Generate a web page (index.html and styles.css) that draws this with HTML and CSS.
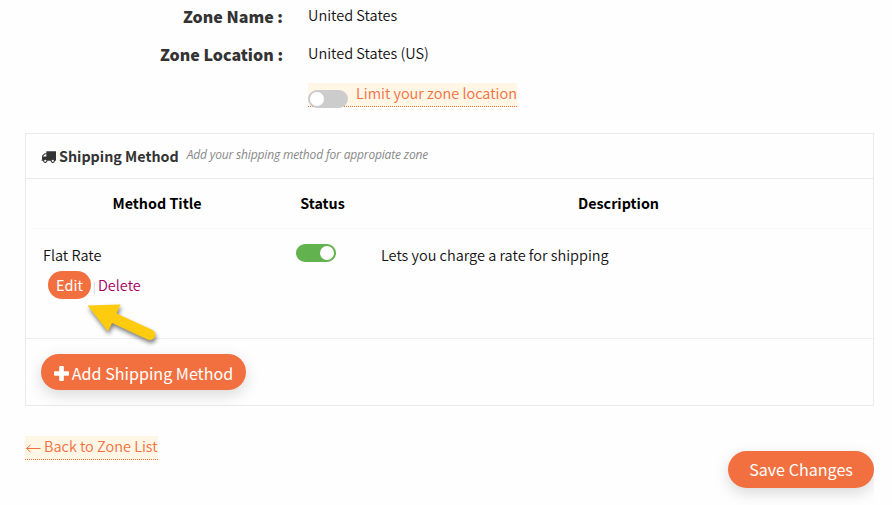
FILE: index.html
```html
<!DOCTYPE html>
<html lang="en">
<head>
    <meta charset="UTF-8">
    <meta name="viewport" content="width=device-width, initial-scale=1.0">
    <title>Shipping Zone</title>
    <link rel="stylesheet" href="styles.css">
</head>
<body>
    <div class="zone-page">
        <div class="zone-row">
            <div class="zone-label">Zone Name :</div>
            <div class="zone-value">United States</div>
        </div>
        <div class="zone-row">
            <div class="zone-label">Zone Location :</div>
            <div class="zone-value">United States (US)</div>
        </div>
        <div class="limit-row">
            <a href="#" class="link limit-link"><span class="switch"></span><span class="limit-text">Limit your zone location</span></a>
        </div>

        <div class="methods">
            <div class="methods-header">
                <svg class="truck" viewBox="0 0 1792 1792"><path fill="currentColor" d="M640 1408q0-52-38-90t-90-38-90 38-38 90 38 90 90 38 90-38 38-90zm-384-512h384v-256h-158q-13 0-22 9l-195 195q-9 9-9 22v30zm1280 512q0-52-38-90t-90-38-90 38-38 90 38 90 90 38 90-38 38-90zm256-1088v1024q0 15-4 26.500t-13.500 18.500-16.500 11.500-23.500 6-22.500 2-25.500 0-22.500-.5q0 106-75 181t-181 75-181-75-75-181h-384q0 106-75 181t-181 75-181-75-75-181h-64q-3 0-22.500.5t-25.500 0-22.500-2-23.500-6-16.500-11.500-13.500-18.500-4-26.500q0-26 19-45t45-19v-320q0-8-.5-35t0-38 2.500-34.500 6.500-37 14-30.500 22.500-30l198-198q19-19 50.500-32t58.500-13h160v-192q0-26 19-45t45-19h1024q26 0 45 19t19 45z"/></svg>
                <span class="methods-title">Shipping Method</span>
                <span class="methods-note">Add your shipping method for appropiate zone</span>
            </div>
            <div class="table-row table-head">
                <div>Method Title</div>
                <div>Status</div>
                <div>Description</div>
            </div>
            <div class="table-row table-body">
                <div class="cell-title">
                    <div>Flat Rate</div>
                    <div class="actions"><a href="#" class="edit">Edit</a><span class="sep">|</span><a href="#" class="delete">Delete</a></div>
                </div>
                <div class="cell-status"><span class="switch on"></span></div>
                <div class="cell-desc">Lets you charge a rate for shipping</div>
            </div>
            <div class="methods-footer">
                <a href="#" class="btn btn-add">
                    <svg class="plus" viewBox="0 0 15 15"><path fill="currentColor" d="M6.200 0h2.600q1 0 1 1v4.200H14q1 0 1 1v2.600q0 1-1 1H9.800V14q0 1-1 1H6.200q-1 0-1-1V9.800H1q-1 0-1-1V6.200q0-1 1-1h4.200V1q0-1 1-1z"/></svg>
                    <span>Add Shipping Method</span>
                </a>
            </div>
            <svg class="pointer" viewBox="0 0 80 50"><path d="M7.500 10.500L40.500 9.500 36.500 18.500 71.500 34.500Q76.500 37 75 41.500 73 46 67.500 44.500L32 28 28 36.500Z"/></svg>
        </div>

        <div class="page-footer">
            <a href="#" class="link back-link"><svg class="arrow" viewBox="0 0 16 10"><path d="M15.500 5.500H1.500M5.500 2L1.500 5.500l4 3.500"/></svg><span>Back to Zone List</span></a>
            <a href="#" class="btn btn-save"><span>Save Changes</span></a>
        </div>
    </div>
</body>
</html>
```
FILE: styles.css
```css
body {
    margin: 0;
    background: #fefefe;
    color: #111;
    font-family: "Noto Sans CJK SC", "Noto Sans", sans-serif;
    font-size: 14.500px;
    font-weight: 350;
    line-height: 24px;
}
a {
    text-decoration: none;
}
.zone-page {
    width: 849px;
    height: 505px;
    padding-left: 25px;
    overflow: hidden;
}
.zone-row {
    display: flex;
    gap: 25px;
    height: 38px;
}
.zone-label {
    width: 258px;
    padding-top: 4px;
    text-align: right;
    font-size: 16px;
    font-weight: 900;
    color: #333;
}
.zone-value {
    padding-top: 3px;
}
.limit-row {
    display: flex;
    height: 50px;
    padding: 7px 0 0 283px;
}
.link {
    display: flex;
    height: 23px;
    color: #f2703f;
    background: #fff6e6;
    border-bottom: 1px dotted #f2703f;
}
.limit-link {
    gap: 8px;
}
.limit-text {
    line-height: 20px;
}
.switch {
    display: flex;
    box-sizing: border-box;
    width: 40px;
    height: 18px;
    padding: 2px;
    border-radius: 9px;
    background: #ccc;
}
.switch::before {
    content: "";
    width: 14px;
    height: 14px;
    border-radius: 50%;
    background: #fff;
}
.switch.on {
    justify-content: flex-end;
    background: #62b34f;
}
.limit-link .switch {
    margin-top: 7px;
}
.methods {
    position: relative;
    box-sizing: border-box;
    height: 273px;
    border: 1px solid #eaeaea;
}
.methods-header {
    display: flex;
    height: 44px;
    padding-left: 15px;
    border-bottom: 1px solid #eaeaea;
}
.truck {
    width: 15px;
    height: 15px;
    margin: 15px 3px 0 0;
    color: #333;
}
.methods-title {
    padding-top: 10px;
    color: #333;
    font-size: 14.300px;
    font-weight: 700;
}
.methods-note {
    margin-left: 8px;
    padding-top: 9px;
    color: #888;
    font-family: "Open Sans", sans-serif;
    font-size: 12px;
    font-style: italic;
    font-weight: 400;
    letter-spacing: -0.160px;
}
.table-row {
    display: grid;
    grid-template-columns: 252px 79px 1fr;
    box-sizing: border-box;
}
.table-head {
    height: 50px;
    padding-top: 12px;
    margin: 0 -2px 0 5px;
    border-bottom: 1px solid #f6f6f6;
    color: #000;
    font-size: 14.300px;
    font-weight: 700;
    text-align: center;
}
.table-body {
    height: 110px;
    padding: 15px 0 0 17px;
    grid-template-columns: 253px 85px 1fr;
    border-bottom: 1px solid #eee;
}
.cell-title,
.cell-desc {
    line-height: 22px;
}
.actions {
    display: flex;
    padding: 5px 0 0 5px;
}
.edit {
    width: 43px;
    height: 28px;
    border-radius: 14px;
    background: #f2703f;
    color: #fff;
    font-weight: 400;
    line-height: 27px;
    text-align: center;
}
.sep {
    margin: 4px 2px 0;
    color: #ccc;
    font-size: 11px;
}
.delete {
    line-height: 28px;
    color: #a6005f;
}
.methods-footer {
    display: flex;
    padding: 15px;
}
.btn {
    display: flex;
    justify-content: center;
    align-items: center;
    border-radius: 19px;
    background: #f2703f;
    box-shadow: 0 5px 15px rgba(0, 0, 0, 0.15);
    color: #fff;
    font-size: 16.100px;
    font-weight: 400;
}
.btn-add {
    width: 205px;
    height: 36px;
    gap: 3px;
}
.btn-add span {
    padding-top: 1px;
}
.plus {
    width: 15px;
    height: 15px;
    margin-top: 2px;
}
/* callout arrow lying over the table */
.pointer {
    position: absolute;
    left: 54px;
    top: 161px;
    width: 80px;
    height: 50px;
    fill: #ffcb0f;
    filter: drop-shadow(1px 3px 2px rgba(0, 0, 0, 0.5));
}
.page-footer {
    display: flex;
    justify-content: space-between;
    padding-top: 30px;
}
.back-link {
    gap: 3px;
}
.back-link span {
    line-height: 20px;
}
.arrow {
    width: 16px;
    height: 10px;
    margin-top: 7px;
    fill: none;
    stroke: currentColor;
}
.btn-save {
    width: 146px;
    height: 37px;
    margin-top: 15px;
}
.btn-save span {
    padding-bottom: 2px;
}
```
